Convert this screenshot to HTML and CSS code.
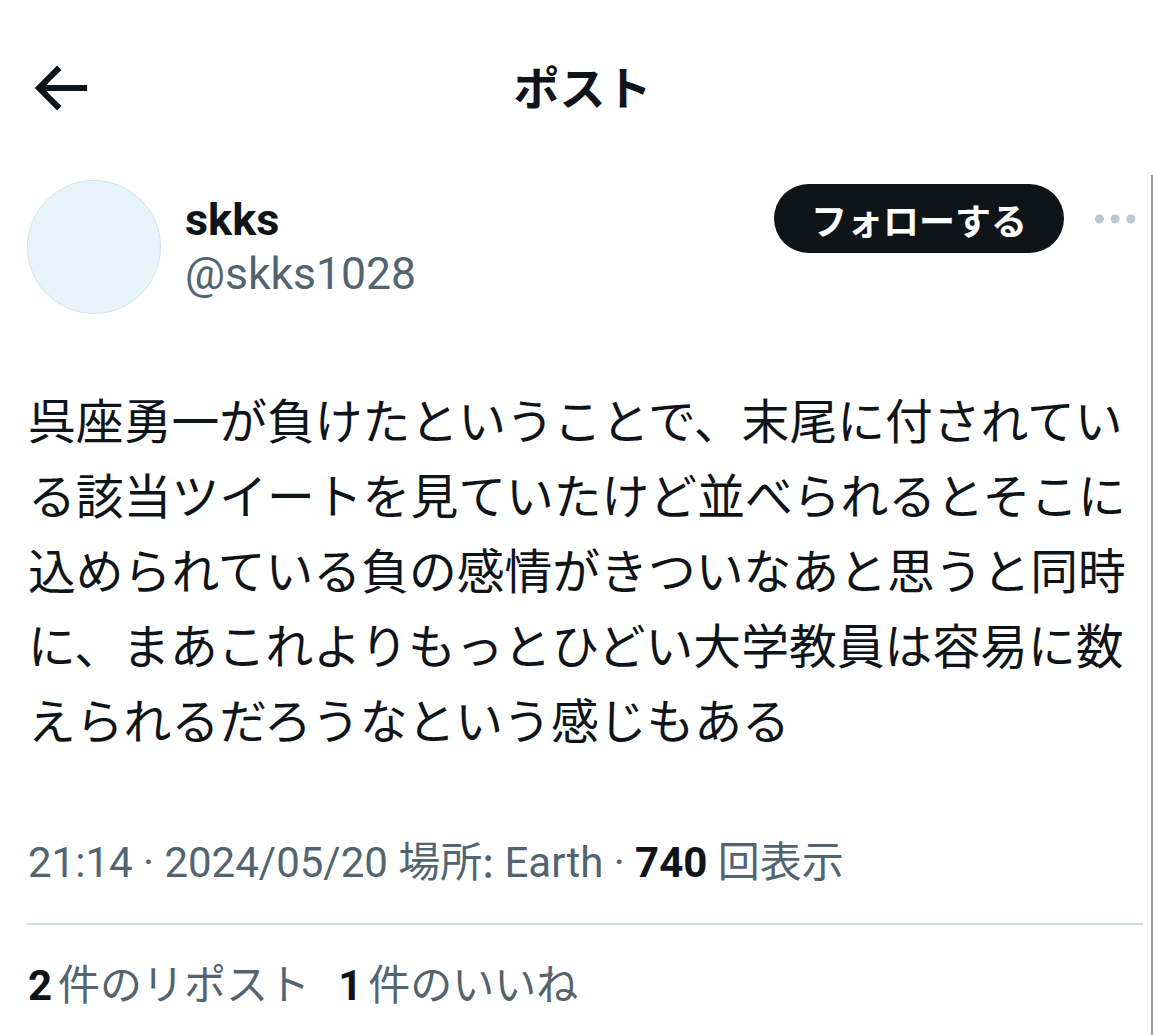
FILE: index.html
```html
<!DOCTYPE html>
<html lang="ja">
<head>
<meta charset="utf-8">
<title>ポスト</title>
<link rel="stylesheet" href="styles.css">
</head>
<body>
<header class="topbar">
  <div class="back">
    <svg viewBox="0 0 24 24" class="back-icon" aria-hidden="true"><path d="M7.414 13l5.043 5.04-1.414 1.42L3.586 12l7.457-7.46 1.414 1.42L7.414 11H21v2H7.414z"/></svg>
  </div>
  <h1 class="title">ポスト</h1>
  <div class="spacer"></div>
</header>
<main class="post">
  <div class="author">
    <div class="avatar"></div>
    <div class="names">
      <div class="name">skks</div>
      <div class="handle">@skks1028</div>
    </div>
    <div class="actions">
      <button class="follow">フォローする</button>
      <svg class="more" viewBox="0 0 41 10" aria-hidden="true"><circle cx="4.5" cy="5" r="4.5"/><circle cx="20.2" cy="5" r="4.5"/><circle cx="35.8" cy="5" r="4.5"/></svg>
    </div>
  </div>
  <p class="text">呉座勇一が負けたということで、末尾に付されている該当ツイートを見ていたけど並べられるとそこに込められている負の感情がきついなあと思うと同時に、まあこれよりもっとひどい大学教員は容易に数えられるだろうなという感じもある</p>
  <div class="meta">21:14 · 2024/05/20 <span class="jp">場所:</span> Earth · <b>740</b> <span class="jp">回表示</span></div>
  <hr class="divider">
  <div class="stats">
    <span class="stat"><b>2</b>件のリポスト</span>
    <span class="stat"><b>1</b>件のいいね</span>
  </div>
</main>
</body>
</html>
```
FILE: styles.css
```css
html, body {
  margin: 0;
  padding: 0;
  background: #ffffff;
}
body {
  width: 1153px;
  font-family: Roboto, "Noto Sans CJK JP", sans-serif;
  color: #0f1419;
  overflow: hidden;
}
.topbar {
  height: 175px;
  box-sizing: border-box;
  padding-top: 52px;
  display: grid;
  grid-template-columns: 200px 1fr 200px;
  align-items: start;
}
.back {
  padding-left: 24px;
  height: 72px;
}
.back-icon {
  width: 72px;
  height: 72px;
  fill: #0f1419;
  display: block;
}
.title {
  margin: -3px 0 0 0;
  text-align: center;
  font-family: "Noto Sans CJK JP", sans-serif;
  font-weight: 700;
  font-size: 46px;
  line-height: 72px;
  padding-left: 12px;
}
.post {
  width: 1153px;
  box-sizing: border-box;
  border-right: 2px solid #9b9b9b;
  padding-bottom: 40px;
}
.author {
  display: flex;
  align-items: flex-start;
  padding: 5px 15px 0 27px;
}
.avatar {
  width: 134px;
  height: 134px;
  box-sizing: border-box;
  border-radius: 50%;
  background: #e7f4fc;
  border: 1px solid #d3e2ea;
  flex: none;
}
.names {
  margin-left: 24px;
  padding-top: 13px;
}
.name {
  font-weight: 700;
  font-size: 45px;
  line-height: 54px;
}
.handle {
  font-size: 44.5px;
  line-height: 54px;
  color: #536471;
}
.actions {
  margin-left: auto;
  display: flex;
  align-items: center;
  gap: 31px;
  padding-top: 4px;
}
.follow {
  width: 290px;
  height: 69px;
  border: none;
  border-radius: 35px;
  background: #0f1419;
  color: #ffffff;
  font-family: "Noto Sans CJK JP", sans-serif;
  font-weight: 700;
  font-size: 36px;
  padding: 0;
}
.more {
  width: 41px;
  height: 10px;
  fill: #b7c9d3;
}
.text {
  margin: 67px 0 0 0;
  padding: 0 20px 0 28px;
  font-family: "Noto Sans CJK JP", sans-serif;
  font-size: 47.8px;
  line-height: 75px;
  color: #0f1419;
}
.meta {
  margin-top: 73px;
  padding-left: 28px;
  font-size: 42px;
  line-height: 60px;
  color: #536471;
}
.meta .jp {
  font-family: "Noto Sans CJK JP", sans-serif;
}
.meta b {
  color: #0f1419;
  font-weight: 700;
}
.divider {
  margin: 30px 8px 0 27px;
  border: none;
  border-top: 2px solid #d2dbdf;
  height: 0;
}
.stats {
  margin-top: 31px;
  padding-left: 28px;
  display: flex;
  gap: 28px;
  font-size: 42px;
  line-height: 60px;
  color: #536471;
  font-family: Roboto, "Noto Sans CJK JP", sans-serif;
}
.stat b {
  color: #0f1419;
  font-weight: 700;
  margin-right: 6px;
}
```
